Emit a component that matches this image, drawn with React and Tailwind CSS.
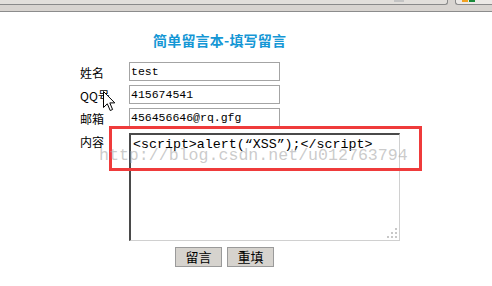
import React from 'react';

const cjk = { fontFamily: '"Noto Sans CJK SC", "Noto Sans", sans-serif' };
const mono = { fontFamily: '"Liberation Mono", "Noto Sans CJK SC", monospace' };

function BrowserEdge() {
  // strip of the browser chrome left at the top of the capture
  return (
    <div className="relative h-[12px] bg-[#d8d4d0] border-b border-[#8c8c8c]">
      <div className="absolute left-0 top-0 w-[448px] h-[5px] bg-[#e2dfdb] border-b border-r border-[#8a8a8a] rounded-br-[3px]" />
      <div className="absolute left-[455px] top-0 w-[40px] h-[5px] bg-[#ece9e6] border-b border-l border-[#8a8a8a] rounded-bl-[3px]">
        <div className="absolute left-[6px] top-0 w-[6px] h-[2px] bg-[#f0a020]" />
        <div className="absolute left-[13px] top-0 w-[6px] h-[2px] bg-[#1a8a3a]" />
      </div>
      <div className="absolute left-[394px] top-0 w-[10px] h-[2px] bg-[#c4c4c4]" />
    </div>
  );
}

function Field({ label, value }) {
  return (
    <div className="flex items-center h-[19px]">
      <span className="w-[49px] text-[12px] leading-[14px] pt-[3px] text-black" style={cjk}>{label}</span>
      <div className="w-[151px] h-[19px] border border-[#a4a4a4] bg-white pl-[1px] flex items-center text-[11.5px] text-black" style={mono}>
        {value}
      </div>
    </div>
  );
}

function Cursor() {
  return (
    <svg className="absolute left-[103px] top-[91px]" width="13" height="21" viewBox="0 0 13 21">
      <path d="M0.5 0.5 L0.5 16.5 L4.3 12.8 L7.2 19.5 L9.6 18.5 L6.8 11.9 L11.8 11.9 Z" fill="#fff" stroke="#000" strokeWidth="1" strokeLinejoin="miter" />
    </svg>
  );
}

function Grip() {
  return (
    <svg className="absolute right-[2px] bottom-[2px]" width="10" height="10" viewBox="0 0 10 10">
      {[[8, 0], [4, 4], [8, 4], [0, 8], [4, 8], [8, 8]].map(([x, y]) => (
        <rect key={`${x}-${y}`} x={x} y={y} width="2" height="2" fill="#c8c8c8" />
      ))}
    </svg>
  );
}

export default function App() {
  return (
    <div className="relative w-[492px] h-[286px] bg-white overflow-hidden">
      <BrowserEdge />

      <h1 className="mt-[20px] pl-[153px] text-[14px] leading-[16px] font-bold text-[#1597d5] tracking-[0.2px]" style={cjk}>
        简单留言本-填写留言
      </h1>

      <div className="mt-[14px] pl-[80px] flex flex-col gap-[4px]">
        <Field label="姓名" value="test" />
        <Field label="QQ号" value="415674541" />
        <Field label="邮箱" value="456456646@rq.gfg" />

        <div className="flex items-start mt-[2px]">
          <span className="w-[49px] text-[12px] leading-[14px] pt-[2px] text-black" style={cjk}>内容</span>
          <div
            className="relative w-[271px] h-[108px] border-t-2 border-l-2 border-r border-b border-t-[#4a4a4a] border-l-[#4a4a4a] border-r-[#d0d0d0] border-b-[#d0d0d0] bg-white pl-[2px] pt-[2px] text-[13.3px] leading-[15px] text-black whitespace-nowrap"
            style={mono}
          >
            {'<script>alert(“XSS”);</script>'}
            <Grip />
          </div>
        </div>
      </div>

      <div className="mt-[6px] pl-[175px] flex gap-[5px]">
        <button className="w-[47px] h-[20px] bg-[#d6d3ce] border border-[#9a9a9a] text-[13px] leading-[16px] text-black" style={cjk}>留言</button>
        <button className="w-[47px] h-[20px] bg-[#d6d3ce] border border-[#9a9a9a] text-[13px] leading-[16px] text-black" style={cjk}>重填</button>
      </div>

      {/* red annotation box over the content */}
      <div className="absolute left-[109px] top-[126px] w-[313px] h-[45px] border-[3px] border-[#ef3b3b]" />

      {/* blog watermark */}
      <div className="absolute left-[99px] top-[147px] text-[16.6px] leading-[17px] text-[#a8a8a8]/60 whitespace-nowrap pointer-events-none" style={mono}>
        http://blog.csdn.net/u012763794
      </div>

      <Cursor />
    </div>
  );
}
